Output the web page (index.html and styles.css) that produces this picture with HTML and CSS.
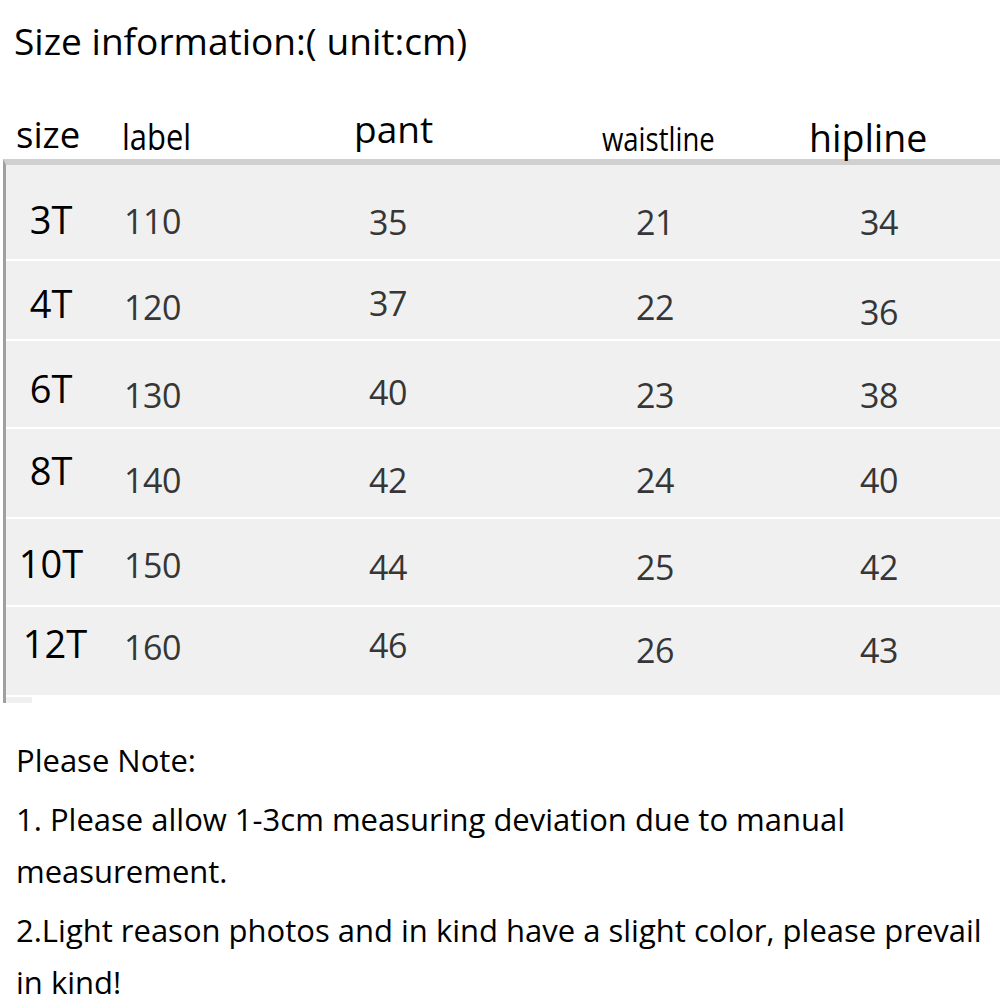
FILE: index.html
```html
<!DOCTYPE html>
<html>
<head>
<meta charset="utf-8">
<link rel="stylesheet" href="styles.css">
</head>
<body>
<h1 class="title">Size information:( unit:cm)</h1>
<div class="head">
  <div class="h h-size">size</div>
  <div class="h h-label">label</div>
  <div class="h h-pant">pant</div>
  <div class="h h-waist">waistline</div>
  <div class="h h-hip">hipline</div>
</div>
<div class="table">
  <div class="row">
    <div class="c c-size dy7">3T</div><div class="c c-label dy9">110</div><div class="c c-pant dy10">35</div><div class="c c-waist dy10">21</div><div class="c c-hip dy10">34</div>
  </div>
  <div class="row">
    <div class="c c-size dy3">4T</div><div class="c c-label dy7">120</div><div class="c c-pant dy3">37</div><div class="c c-waist dy7">22</div><div class="c c-hip dy12">36</div>
  </div>
  <div class="row">
    <div class="c c-size dy4">6T</div><div class="c c-label dy11">130</div><div class="c c-pant dy8">40</div><div class="c c-waist dy11">23</div><div class="c c-hip dy11">38</div>
  </div>
  <div class="row">
    <div class="c c-size up3">8T</div><div class="c c-label dy7">140</div><div class="c c-pant dy7">42</div><div class="c c-waist dy7">24</div><div class="c c-hip dy7">40</div>
  </div>
  <div class="row">
    <div class="c c-size dy1">10T</div><div class="c c-label dy3">150</div><div class="c c-pant dy5">44</div><div class="c c-waist dy5">25</div><div class="c c-hip dy5">42</div>
  </div>
  <div class="row">
    <div class="c c-size c-twelve up8">12T</div><div class="c c-label up4">160</div><div class="c c-pant up6">46</div><div class="c c-waist up1">26</div><div class="c c-hip up1">43</div>
  </div>
  <div class="tail"></div>
</div>
<div class="notes">
  <p class="note">Please Note:</p>
  <p class="note">1. Please allow 1-3cm measuring deviation due to manual measurement.</p>
  <p class="note">2.Light reason photos and in kind have a slight color, please prevail in kind!</p>
</div>
</body>
</html>
```
FILE: styles.css
```css
html, body {
  margin: 0;
  padding: 0;
  background: #ffffff;
}
body {
  width: 1000px;
  font-family: "Open Sans", "Noto Sans", "Liberation Sans", sans-serif;
  color: #000;
}
.title {
  margin: 0;
  padding: 15px 0 0 14px;
  height: 71px;
  box-sizing: border-box;
  font-size: 37.1px;
  font-weight: 400;
  line-height: 52px;
  white-space: nowrap;
}
.head {
  display: grid;
  grid-template-columns: 96px 148px 286px 248px 222px;
  align-items: end;
  height: 88px;
}
.h {
  line-height: 1;
  font-weight: 400;
  white-space: nowrap;
}
.h-size {
  font-size: 36.5px;
  padding-left: 16px;
  padding-bottom: 7px;
}
.h-label {
  font-size: 36px;
  padding-left: 26px;
  padding-bottom: 4px;
  transform: scaleX(0.86);
  transform-origin: 26px 0;
}
.h-pant {
  font-size: 37px;
  padding-left: 110px;
  padding-bottom: 12px;
}
.h-waist {
  font-size: 32px;
  padding-left: 72px;
  padding-bottom: 4px;
  transform: scaleX(0.86);
  transform-origin: 72px 0;
}
.h-hip {
  font-size: 37.5px;
  padding-left: 31px;
  padding-bottom: 3px;
}
.table {
  margin-left: 3px;
  border-left: 3px solid #a0a0a0;
  border-top: 6px solid #d0d0d0;
  display: grid;
  grid-template-rows: 94px 78px 86px 88px 86px 88px 6px;
  row-gap: 2px;
  background: #ffffff;
}
.row {
  display: grid;
  grid-template-columns: 90px 148px 286px 248px 222px;
  align-items: center;
  background: #f0f0f0;
}
.tail {
  width: 26px;
  background: #f0f0f0;
}
.c {
  font-size: 34px;
  color: #363636;
  line-height: 1;
  letter-spacing: -0.5px;
}
.c-size {
  color: #000;
  font-size: 38px;
  letter-spacing: 0;
  text-align: center;
}
.c-twelve {
  padding-left: 8px;
}
.c-label {
  padding-left: 28px;
}
.c-pant {
  padding-left: 125px;
}
.c-waist {
  padding-left: 106px;
}
.c-hip {
  padding-left: 82px;
}
.dy1 { padding-top: 2px; }
.dy3 { padding-top: 6px; }
.dy4 { padding-top: 8px; }
.dy5 { padding-top: 10px; }
.dy7 { padding-top: 14px; }
.dy8 { padding-top: 16px; }
.dy9 { padding-top: 18px; }
.dy10 { padding-top: 20px; }
.dy11 { padding-top: 22px; }
.dy12 { padding-top: 24px; }
.up1 { padding-bottom: 2px; }
.up3 { padding-bottom: 6px; }
.up4 { padding-bottom: 8px; }
.up6 { padding-bottom: 12px; }
.up8 { padding-bottom: 16px; }
.notes {
  padding: 31px 0 0 16px;
  width: 1000px;
  box-sizing: border-box;
}
.note {
  margin: 0 0 7px 0;
  font-size: 31px;
  line-height: 52px;
}
```
